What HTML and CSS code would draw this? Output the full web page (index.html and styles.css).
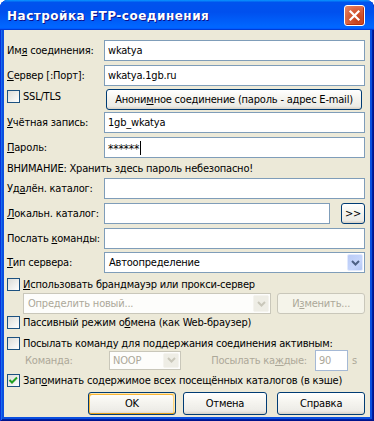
FILE: index.html
```html
<!DOCTYPE html>
<html lang="ru">
<head>
  <meta charset="UTF-8" />
  <title>Настройка FTP-соединения</title>
  <link rel="stylesheet" href="styles.css">
</head>
<body>
  <div class="window">
    <div class="title-bar">
      <span class="title-text">Настройка FTP-соединения</span>
      <button class="close-btn" aria-label="Закрыть">
        <svg width="13" height="13" viewBox="0 0 13 13"><path d="M2.5 2.5 L10.5 10.5 M10.5 2.5 L2.5 10.5" stroke="#fff" stroke-width="2.2" stroke-linecap="square" fill="none"/></svg>
      </button>
    </div>

    <div class="window-body">
      <div class="row row-field">
        <label class="lbl">Им<u>я</u> соединения:</label>
        <input class="field" type="text" value="wkatya">
      </div>
      <div class="row row-field">
        <label class="lbl"><u>С</u>ервер [:Порт]:</label>
        <input class="field" type="text" value="wkatya.1gb.ru">
      </div>
      <div class="row row-ssl">
        <label class="check ssl-check"><span class="box"></span><span class="check-text">SSL/TLS</span></label>
        <button class="btn btn-anon">Анони<u>м</u>ное соединение (пароль - адрес E-mail)</button>
      </div>
      <div class="row row-field">
        <label class="lbl"><u>У</u>чётная запись:</label>
        <input class="field" type="text" value="1gb_wkatya">
      </div>
      <div class="row row-field">
        <label class="lbl"><u>П</u>ароль:</label>
        <div class="field pass">******<span class="caret"></span></div>
      </div>
      <div class="row row-warn">ВНИМАНИЕ: Хранить здесь пароль небезопасно!</div>
      <div class="row row-field">
        <label class="lbl">Уд<u>а</u>лён. каталог:</label>
        <input class="field" type="text" value="">
      </div>
      <div class="row row-field">
        <label class="lbl"><u>Л</u>окальн. каталог:</label>
        <input class="field field-local" type="text" value="">
        <button class="btn btn-browse">&gt;&gt;</button>
      </div>
      <div class="row row-field row-cmd">
        <label class="lbl">Послать <u>к</u>оманды:</label>
        <input class="field" type="text" value="">
      </div>
      <div class="row row-field">
        <label class="lbl"><u>Т</u>ип сервера:</label>
        <div class="combo combo-type">
          <span class="combo-text">Автоопределение</span>
          <span class="combo-arrow"><svg width="9" height="6" viewBox="0 0 9 6"><path d="M1 1 L4.5 4.5 L8 1" stroke="#4D6185" stroke-width="2" fill="none"/></svg></span>
        </div>
      </div>
      <div class="row check-row row-fw">
        <label class="check"><span class="box"></span><span class="check-text"><u>И</u>спользовать брандмауэр или прокси-сервер</span></label>
      </div>
      <div class="row row-proxy">
        <div class="combo combo-proxy disabled">
          <span class="combo-text">Определить новый...</span>
          <span class="combo-arrow"><svg width="9" height="6" viewBox="0 0 9 6"><path d="M1 1 L4.5 4.5 L8 1" stroke="#C9C7BA" stroke-width="2" fill="none"/></svg></span>
        </div>
        <button class="btn btn-edit" disabled>И<u>з</u>менить...</button>
      </div>
      <div class="row check-row row-passive">
        <label class="check"><span class="box"></span><span class="check-text">Пассивный режим о<u>б</u>мена (как Web-браузер)</span></label>
      </div>
      <div class="row check-row row-keep">
        <label class="check"><span class="box"></span><span class="check-text">Посылать команду для поддержания соединения активным:</span></label>
      </div>
      <div class="row row-noop">
        <label class="lbl-cmd disabled-text">Коман<u>д</u>а:</label>
        <div class="combo combo-noop disabled">
          <span class="combo-text">NOOP</span>
          <span class="combo-arrow"><svg width="9" height="6" viewBox="0 0 9 6"><path d="M1 1 L4.5 4.5 L8 1" stroke="#C9C7BA" stroke-width="2" fill="none"/></svg></span>
        </div>
        <label class="lbl-every disabled-text">Посылать ка<u>ж</u>дые:</label>
        <input class="field field-sec" type="text" value="90" disabled>
        <span class="unit disabled-text">s</span>
      </div>
      <div class="row check-row row-cache">
        <label class="check"><span class="box checked"><svg width="11" height="11" viewBox="0 0 11 11"><path d="M1.5 5 L4 7.5 L9 2.5" stroke="#21A121" stroke-width="2" fill="none"/></svg></span><span class="check-text">Зап<u>о</u>минать содержимое всех посещённых каталогов (в кэше)</span></label>
      </div>
      <div class="row row-buttons">
        <button class="btn btn-ok">OK</button>
        <button class="btn btn-cancel">Отмена</button>
        <button class="btn btn-help">Справка</button>
      </div>
    </div>
  </div>
</body>
</html>
```

FILE: styles.css
```css
* {
  box-sizing: border-box;
}

body {
  margin: 0;
  background: #fff;
  font-family: "DejaVu Sans Condensed", "DejaVu Sans", sans-serif;
  font-stretch: condensed;
  font-size: 11px;
  letter-spacing: -0.2px;
  color: #000;
}

u {
  text-decoration: underline;
  text-underline-offset: 1px;
}

.window {
  width: 374px;
  height: 421px;
  display: flex;
  flex-direction: column;
  padding: 0 4px 4px;
  background: #0A4FE0;
  border-radius: 8px 8px 0 0;
  box-shadow: inset 1px 0 #0831D9, inset -1px -1px #00138C, inset 2px 0 #166AEE, inset -2px -2px #001EA0;
}

.title-bar {
  height: 30px;
  margin: 0 -4px;
  padding: 0 9px 0 7px;
  display: flex;
  align-items: center;
  justify-content: space-between;
  border-radius: 8px 8px 0 0;
  background: linear-gradient(180deg, #0997FF, #0053EE 8%, #0050EE 40%, #0066FF 88%, #0066FF 93%, #005BFF 95%, #003DD7 96%, #003DD7);
}

.title-text {
  color: #fff;
  font-family: "DejaVu Sans", sans-serif;
  font-stretch: normal;
  font-weight: bold;
  font-size: 12px;
  letter-spacing: 0.5px;
  text-shadow: 1px 1px #0F1089;
  margin-top: 1px;
}

.close-btn {
  width: 21px;
  height: 21px;
  padding: 0;
  display: flex;
  align-items: center;
  justify-content: center;
  border: 1px solid #fff;
  border-radius: 3px;
  background: radial-gradient(circle at 70% 75%, #C33D17, #D8603C 55%, #E98A6A);
  box-shadow: inset -1px -1px #B8310E;
}

.window-body {
  flex: 1;
  display: flex;
  flex-direction: column;
  padding: 8px 5px 0 3px;
  background: #ECE9D8;
}

.row {
  display: flex;
  align-items: center;
  white-space: nowrap;
}

.row-field {
  height: 25px;
}

.row-cmd {
  height: 24px;
}

.lbl {
  width: 97px;
  flex: none;
}

.field {
  flex: 1;
  min-width: 0;
  height: 21px;
  margin: 0;
  padding: 0 3px;
  border: 1px solid #7F9DB9;
  background: #fff;
  font: inherit;
  letter-spacing: inherit;
  color: #000;
  outline: none;
}

.pass {
  display: flex;
  align-items: center;
  padding-top: 2px;
  font-size: 12px;
}

.caret {
  width: 1px;
  height: 14px;
  margin-left: 1px;
  margin-top: -2px;
  background: #000;
}

.field-local {
  flex: none;
  width: 226px;
}

.row-ssl {
  height: 22px;
  align-items: flex-start;
}

.ssl-check {
  width: 99px;
  margin-top: 2px;
}

.row-warn {
  height: 16px;
}

/* checkboxes */
.check {
  display: flex;
  align-items: center;
  line-height: 13px;
}

.box {
  width: 13px;
  height: 13px;
  flex: none;
  display: flex;
  align-items: center;
  justify-content: center;
  border: 1px solid #1C5180;
  background: linear-gradient(135deg, #DCDCD7, #fff);
}

.check-text {
  margin-left: 3px;
}

.check-row {
  align-items: flex-start;
}

.row-fw {
  height: 17px;
  padding-top: 3px;
}

.row-passive {
  height: 19px;
  padding-top: 1px;
}

.row-keep {
  height: 15px;
  padding-top: 3px;
}

.row-cache {
  height: 19px;
  padding-top: 3px;
}

/* combos */
.combo {
  height: 21px;
  display: flex;
  align-items: center;
  border: 1px solid #7F9DB9;
  background: #fff;
  padding: 1px;
}

.combo-text {
  flex: 1;
  padding-left: 3px;
}

.combo-arrow {
  width: 16px;
  height: 100%;
  display: flex;
  align-items: center;
  justify-content: center;
  border: 1px solid #E1EAFE;
  border-radius: 2px;
  background: linear-gradient(135deg, #BACBF6, #C6D6FC 60%, #B4C7F4);
}

.combo-type {
  flex: 1;
}

.combo.disabled {
  border-color: #C9C7BA;
  background: #FDFDFB;
  color: #ACA899;
}

.combo.disabled .combo-arrow {
  border-color: #F4F3EE;
  background: #EEEDE5;
}

.row-proxy {
  height: 23px;
}

.combo-proxy {
  width: 249px;
  margin-left: 16px;
}

.btn-edit {
  width: 88px;
  margin-left: 6px;
}

.row-noop {
  height: 22px;
  padding-left: 18px;
}

.lbl-cmd {
  width: 84px;
}

.combo-noop {
  width: 72px;
  height: 19px;
}

.combo-noop .combo-text {
  padding-left: 2px;
}

.lbl-every {
  width: 126px;
  text-align: right;
}

.field-sec {
  flex: none;
  width: 33px;
  margin-left: 8px;
  border-color: #A5B9D5;
  background: #fff;
  color: #ACA899;
}

.unit {
  margin-left: 4px;
}

.disabled-text {
  color: #ACA899;
}

/* buttons */
.btn {
  height: 21px;
  padding: 0;
  border: 1px solid #003C74;
  border-radius: 3px;
  background: linear-gradient(180deg, #fff, #F6F5F0 40%, #ECEBE6 86%, #D6D0C5);
  font: inherit;
  letter-spacing: inherit;
  color: #000;
}

.btn:disabled {
  border-color: #C9C7BA;
  background: #F5F4EA;
  color: #ACA899;
}

.btn-anon {
  width: 256px;
  margin-top: 1px;
  margin-left: 0;
}

.btn-browse {
  width: 25px;
  margin-left: 11px;
  height: 21px;
}

.row-buttons {
  height: 25px;
  padding-top: 2px;
  align-items: flex-start;
}

.row-buttons .btn {
  height: 23px;
}

.btn-ok {
  width: 88px;
  margin-left: 81px;
  box-shadow: inset 0 -1px #E5A01A, inset -1px 1px #FCE7B5, inset 1px 2px #F8B636, inset -2px 2px #FBD67F;
}

.btn-cancel {
  width: 85px;
  margin-left: 7px;
}

.btn-help {
  width: 88px;
  margin-left: 10px;
}
```
